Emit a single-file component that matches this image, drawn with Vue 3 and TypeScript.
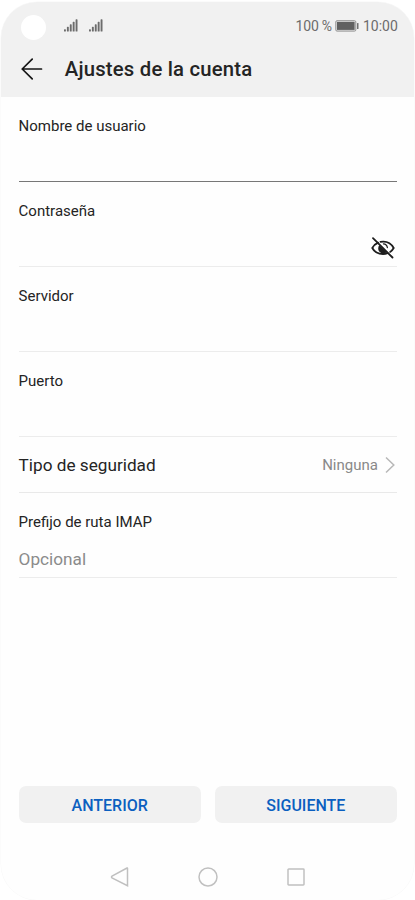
<script setup lang="ts">
interface Field {
  label: string
  active?: boolean
  secret?: boolean
}

const fields: Field[] = [
  { label: 'Nombre de usuario', active: true },
  { label: 'Contraseña', secret: true },
  { label: 'Servidor' },
  { label: 'Puerto' },
]
const signalBars = [0, 1, 2, 3, 4]
</script>

<template>
  <div class="screen">
    <header class="header">
      <div class="status">
        <span class="camera"></span>
        <svg v-for="n in 2" :key="n" class="signal" width="14" height="13" viewBox="0 0 14 13">
          <rect v-for="i in signalBars" :key="i" :x="i * 2.9" :y="10.3 - i * 2.5" width="1.9" :height="2.3 + i * 2.5" rx=".6" />
        </svg>
        <span class="percent">100 %</span>
        <svg class="battery" width="24" height="12" viewBox="0 0 24 12">
          <rect x=".8" y=".7" width="20" height="10.4" rx="1.2" fill="#e2e2e2" stroke="#929292" stroke-width="1" />
          <rect x="2" y="1.9" width="17.6" height="8" fill="#606060" />
          <rect x="22" y="3" width="1.5" height="6" rx=".5" fill="#707070" />
        </svg>
        <span class="clock">10:00</span>
      </div>
      <div class="titlebar">
        <svg class="back" width="22" height="22" viewBox="0 0 22 22">
          <path d="M20.500 11H1.200M11.200 1.200L1.200 11l10 9.800" />
        </svg>
        <h1>Ajustes de la cuenta</h1>
      </div>
    </header>

    <main class="form">
      <div v-for="field in fields" :key="field.label" class="field" :class="{ active: field.active }">
        <span class="label">{{ field.label }}</span>
        <svg v-if="field.secret" class="eye" width="24" height="22" viewBox="0 0 24 22">
          <path d="M7.100 5.600C4.400 6.800 2.400 8.800 1.300 11c2 3.800 6 6 10.700 6 1.700 0 3.200-.3 4.600-.8M9.500 4.800c6-1 10.700 1.500 13.200 6.200-.9 1.600-2.100 2.900-3.600 3.900" />
          <path class="pupil" d="M8.200 8.200L15.800 14.900A5 5 0 0 1 7.200 11.500c0-1.300.3-2.400 1-3.300Z" />
          <path class="thin" d="M12.400 6.900c2 .1 3.700 1.600 4 3.800" />
          <path d="M2 1.200l19.500 19.300" />
        </svg>
      </div>
      <div class="security">
        <span class="security-name">Tipo de seguridad</span>
        <span class="security-value">Ninguna</span>
        <svg class="chevron" width="10" height="18" viewBox="0 0 10 18">
          <path d="M1 1.500l7.800 7.500L1 16.500" />
        </svg>
      </div>
      <div class="field">
        <span class="label">Prefijo de ruta IMAP</span>
        <span class="placeholder">Opcional</span>
      </div>
    </main>

    <div class="actions">
      <button type="button">ANTERIOR</button>
      <button type="button">SIGUIENTE</button>
    </div>

    <nav class="navbar">
      <svg width="20" height="20" viewBox="0 0 20 20"><path d="M17.500 1.300v17.400L2 10.900q-1-.9 0-1.700L17 1q.5-.2.500.3Z" /></svg>
      <svg width="20" height="20" viewBox="0 0 20 20"><circle cx="10" cy="10" r="9" /></svg>
      <svg width="20" height="20" viewBox="0 0 20 20"><rect x="2" y="2" width="16" height="16" rx=".7" /></svg>
    </nav>
  </div>
</template>

<style>
body {
  background: #fff;
}
</style>

<style scoped>
.screen {
  box-sizing: border-box;
  display: flex;
  flex-direction: column;
  width: 412.5px;
  height: 898px;
  margin: 1.5px 0 0 1.3px;
  overflow: hidden;
  border-radius: 36px;
  background: #fefefe;
  box-shadow: 0 0 0 .5px #f8f8f8;
  color: #242424;
  font-family: Roboto, sans-serif;
}
.header {
  height: 95.5px;
  flex: none;
  background: #f1f1f1;
}
.status {
  display: flex;
  align-items: center;
  height: 49px;
  padding: 0 16px 0 19.3px;
  color: #6c6c6c;
  font-size: 14px;
}
.camera {
  width: 25px;
  height: 25px;
  margin: 2px 18px 0 0;
  border-radius: 50%;
  background: #fff;
}
.signal {
  margin: 0 11px 2px 0;
  fill: #6c6c6c;
}
.percent {
  margin-left: auto;
  letter-spacing: -.2px;
}
.battery {
  margin: 0 4px 1px 3px;
}
.titlebar {
  display: flex;
  align-items: center;
  height: 37px;
  padding-left: 19.5px;
}
.back {
  margin-right: 22px;
  fill: none;
  stroke: #151515;
  stroke-width: 1.7;
  stroke-linecap: round;
  stroke-linejoin: round;
}
h1 {
  margin: 0;
  font-size: 20.3px;
  line-height: 24px;
  font-weight: 500;
  letter-spacing: .2px;
}
.form {
  padding: 0 16.9px 0 17.3px;
}
.field {
  box-sizing: border-box;
  display: flex;
  flex-direction: column;
  height: 85px;
  padding-top: 19.4px;
  border-bottom: 1px solid #ececec;
}
.field.active {
  border-color: #777;
}
.label {
  font-size: 15px;
  line-height: 20px;
}
.eye {
  align-self: flex-end;
  margin: 16px 2px 0 0;
}
.eye path {
  fill: none;
  stroke: #1d1d1d;
  stroke-width: 1.8;
  stroke-linecap: round;
}
.eye .pupil {
  fill: #1d1d1d;
  stroke: none;
}
.eye .thin {
  stroke-width: 1.2;
}
.security {
  box-sizing: border-box;
  display: flex;
  align-items: center;
  height: 56px;
  border-bottom: 1px solid #e9e9e9;
}
.security-name {
  flex: 1;
  font-size: 17.2px;
}
.security-value {
  color: #898989;
  font-size: 15px;
}
.chevron {
  margin: 0 2px 0 7px;
  fill: none;
  stroke: #b8b8b8;
  stroke-width: 1.5;
}
.placeholder {
  margin-top: 15.6px;
  color: #8b8b8b;
  font-size: 17.2px;
  line-height: 22px;
}
.actions {
  display: grid;
  grid-template-columns: 1fr 1fr;
  gap: 14px;
  margin-top: auto;
  padding: 0 16.9px 0 17.3px;
}
button {
  height: 37px;
  padding: 1px 0 0;
  border: 0;
  border-radius: 7px;
  background: #f1f1f1;
  color: #0b5fc0;
  font-family: inherit;
  font-size: 16px;
  font-weight: 500;
}
.navbar {
  display: flex;
  justify-content: center;
  gap: 68px;
  padding: 43.3px 0 13px;
  flex: none;
}
.navbar svg {
  fill: none;
  stroke: #c0c0c0;
  stroke-width: 1.5;
}
</style>
